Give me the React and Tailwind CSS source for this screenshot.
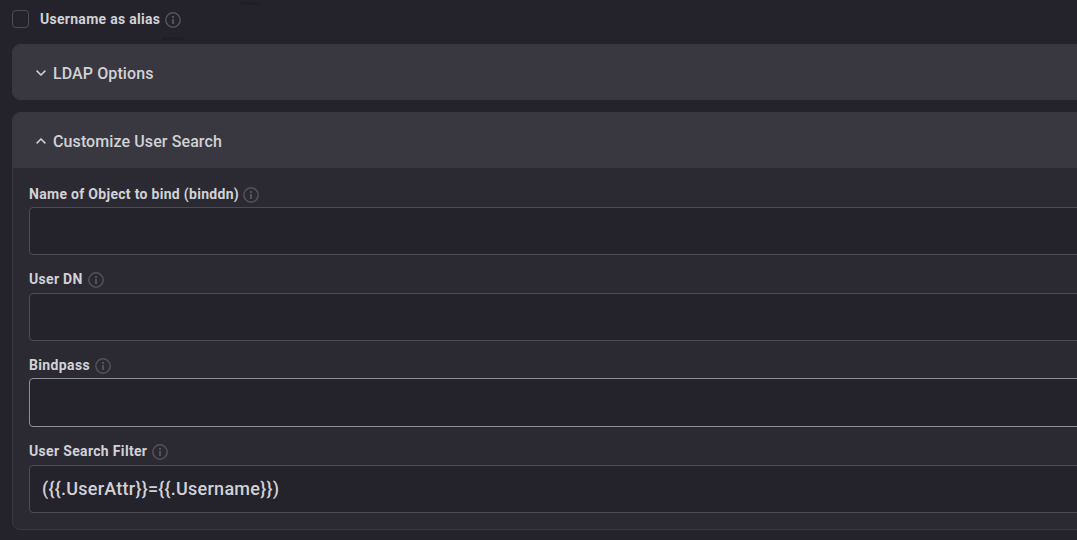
import React, { useState } from "react";
import clsx from "clsx";

function InfoIcon() {
  return (
    <svg viewBox="0 0 16 16" fill="none" className="w-4 h-4 shrink-0 mt-[2px] text-[#53525b]">
      <circle cx="8" cy="8" r="7.2" stroke="currentColor" strokeWidth="1.5" />
      <rect x="7" y="4" width="2" height="2" fill="currentColor" />
      <rect x="7" y="7" width="2" height="5" fill="currentColor" />
    </svg>
  );
}

function Chevron({ open }) {
  return (
    <svg viewBox="0 0 10 6" fill="none" className="w-2.5 h-1.5 shrink-0 text-[#d0d0d4]">
      <path
        d={open ? "M0.6 5.4 L5 1 L9.4 5.4" : "M0.6 0.6 L5 5 L9.4 0.6"}
        stroke="currentColor"
        strokeWidth="1.5"
      />
    </svg>
  );
}

function PanelHeader({ title, open, onClick }) {
  return (
    <button
      type="button"
      onClick={onClick}
      className="w-full flex items-center gap-[7px] pl-[23px] pt-px bg-[#393841] h-[55px] text-left"
    >
      <Chevron open={open} />
      <span className="pt-[2px] text-[16px] leading-6 font-medium text-[#d2d2d6] whitespace-nowrap tracking-[0.1px]">
        {title}
      </span>
    </button>
  );
}

function Field({ label, labelClass, rowClass, inputClass, value, onChange }) {
  return (
    <div>
      <label className={clsx("flex items-start gap-[5px] pt-px", rowClass)}>
        <span
          className={clsx(
            "text-[14px] leading-[18px] font-bold text-[#d2d2d6] whitespace-nowrap",
            labelClass
          )}
        >
          {label}
        </span>
        <InfoIcon />
      </label>
      <input
        type="text"
        value={value}
        onChange={onChange}
        className={clsx(
          "block w-full rounded border bg-[#24232b] px-3 pb-[2px] text-[18px] font-medium text-[#d2d2d6] tracking-[0.25px] outline-none",
          inputClass
        )}
      />
    </div>
  );
}

function App() {
  const [alias, setAlias] = useState(false);
  const [ldapOpen, setLdapOpen] = useState(false);
  const [searchOpen, setSearchOpen] = useState(true);
  const [form, setForm] = useState({
    binddn: "",
    userdn: "",
    bindpass: "",
    userfilter: "({{.UserAttr}}={{.Username}})",
  });

  const update = (key) => (e) => setForm({ ...form, [key]: e.target.value });

  return (
    <div className="w-full h-[540px] overflow-hidden bg-[#24232b] font-['Roboto','Liberation_Sans',sans-serif] relative">
      {/* The panels run past the right edge of the view */}
      <div className="w-[1120px] pl-3">
        <div className="h-11 pt-[10px] flex items-start">
          <label className="flex items-start">
            <input
              type="checkbox"
              checked={alias}
              onChange={(e) => setAlias(e.target.checked)}
              className="appearance-none w-[17px] h-[18px] rounded border border-[#4d4c55] checked:bg-[#6c6b75]"
            />
            <span className="ml-[11px] mr-[5px] w-[120px] text-[14px] leading-[18px] font-bold text-[#d2d2d6] whitespace-nowrap tracking-[0.28px]">
              Username as alias
            </span>
            <InfoIcon />
          </label>
        </div>

        <div className="rounded-lg border border-[#393841] bg-[#393841] overflow-hidden h-14">
          <PanelHeader
            title="LDAP Options"
            open={ldapOpen}
            onClick={() => setLdapOpen(!ldapOpen)}
          />
        </div>

        <div className="mt-3 rounded-lg border border-[#393841] bg-[#2b2a33] overflow-hidden">
          <PanelHeader
            title="Customize User Search"
            open={searchOpen}
            onClick={() => setSearchOpen(!searchOpen)}
          />
          {searchOpen && (
            <div className="px-4 pt-4 pb-4 flex flex-col gap-3.5">
              <Field
                label="Name of Object to bind (binddn)"
                labelClass="w-[209px] tracking-[0.3px]"
                rowClass="h-[23px]"
                inputClass="h-12 border-[#4d4c55]"
                value={form.binddn}
                onChange={update("binddn")}
              />
              <Field
                label="User DN"
                labelClass="w-[54px] tracking-[0.3px]"
                rowClass="h-6"
                inputClass="h-12 border-[#4d4c55]"
                value={form.userdn}
                onChange={update("userdn")}
              />
              <Field
                label="Bindpass"
                labelClass="w-[61px] tracking-[0.36px]"
                rowClass="h-[23px]"
                inputClass="h-[49px] border-[#8f8f97]"
                value={form.bindpass}
                onChange={update("bindpass")}
              />
              <Field
                label="User Search Filter"
                labelClass="w-[118px] tracking-[0.33px]"
                rowClass="h-6"
                inputClass="h-12 border-[#4d4c55]"
                value={form.userfilter}
                onChange={update("userfilter")}
              />
            </div>
          )}
        </div>
      </div>

      {/* Faint marks above and below the alias row */}
      <div className="absolute left-[239px] top-[2px] w-[21px] h-[3px] rounded bg-[#201f28]"></div>
      <div className="absolute left-[162px] top-[37px] w-[21px] h-[3px] rounded bg-[#201f28]"></div>
    </div>
  );
}

export default App;
